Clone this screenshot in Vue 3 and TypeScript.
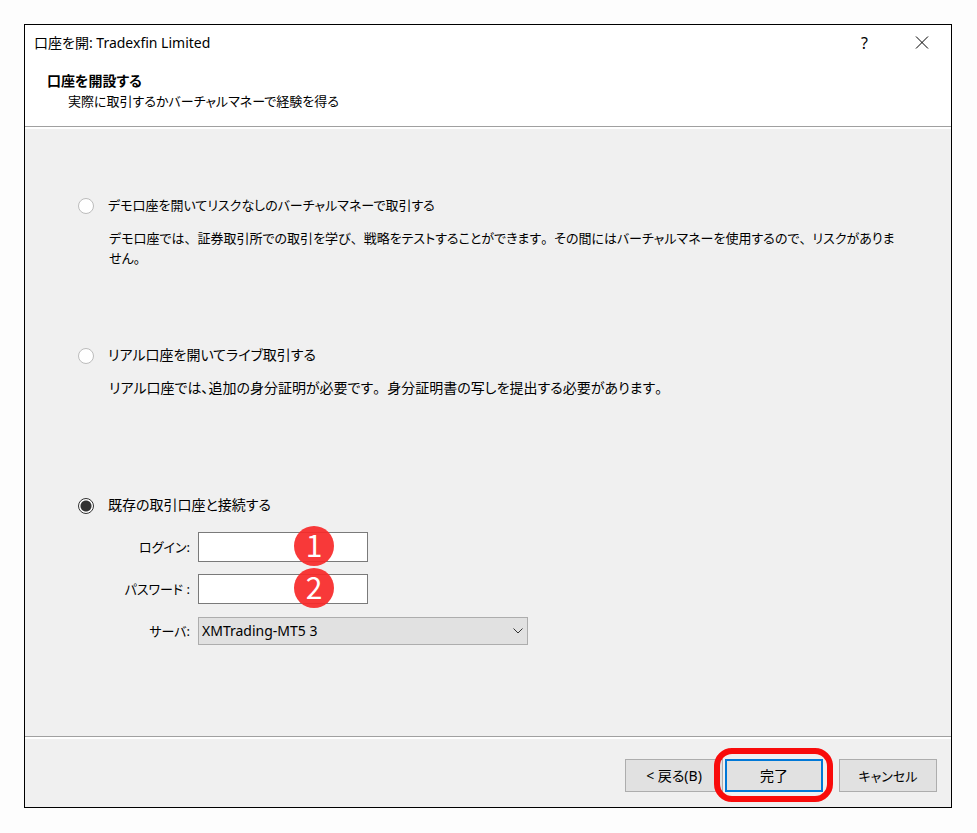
<script setup lang="ts">
import { ref } from 'vue'

type AccountMode = 'demo' | 'real' | 'existing'

const mode = ref<AccountMode>('existing')
const login = ref('')
const password = ref('')
const server = ref('XMTrading-MT5 3')
const servers: string[] = ['XMTrading-MT5 3']

const demoLines: string[] = [
  'デモ口座では、証券取引所での取引を学び、戦略をテストすることができます。その間にはバーチャルマネーを使用するので、リスクがありま',
  'せん。',
]
const realLines: string[] = [
  'リアル口座では、追加の身分証明が必要です。身分証明書の写しを提出する必要があります。',
]

// Separates punctuation, which can keep its full width while kana are set proportionally.
function pieces(line: string): string[] {
  return line.split(/([、。])/).filter((part) => part !== '')
}

function markClass(part: string): Record<string, boolean> {
  return { comma: part === '、', period: part === '。' }
}
</script>

<template>
  <main class="dialog">
    <header class="top">
      <div class="titlebar">
        <span class="caption">口座を開: Tradexfin Limited</span>
        <div class="window-buttons">
          <button type="button" class="icon-button" aria-label="ヘルプ">?</button>
          <button type="button" class="icon-button" aria-label="閉じる">
            <svg width="14" height="14" viewBox="0 0 14 14" aria-hidden="true">
              <path d="M1 0.5L13 12.5M13 0.5L1 12.5" fill="none" stroke="#000" stroke-width="1" />
            </svg>
          </button>
        </div>
      </div>
      <div class="intro">
        <h1>口座を開設する</h1>
        <p class="compact">実際に取引するかバーチャルマネーで経験を得る</p>
      </div>
    </header>

    <form id="account-form" class="body" @submit.prevent>
      <section class="option">
        <label class="choice compact">
          <input v-model="mode" type="radio" name="mode" value="demo" />
          <span>デモ口座を開いてリスクなしのバーチャルマネーで取引する</span>
        </label>
        <p class="description compact">
          <span v-for="line in demoLines" :key="line" class="line"><span
            v-for="(part, index) in pieces(line)"
            :key="index"
            :class="markClass(part)"
          >{{ part }}</span></span>
        </p>
      </section>

      <section class="option">
        <label class="choice">
          <input v-model="mode" type="radio" name="mode" value="real" />
          <span>リアル口座を開いてライブ取引する</span>
        </label>
        <p class="description">
          <span v-for="line in realLines" :key="line" class="line"><span
            v-for="(part, index) in pieces(line)"
            :key="index"
            :class="markClass(part)"
          >{{ part }}</span></span>
        </p>
      </section>

      <section class="option">
        <label class="choice">
          <input v-model="mode" type="radio" name="mode" value="existing" />
          <span>既存の取引口座と接続する</span>
        </label>
        <div class="fields">
          <label for="login" class="compact">ログイン:</label>
          <div class="entry">
            <input id="login" v-model="login" type="text" />
            <span class="badge">1</span>
          </div>
          <label for="password" class="compact">パスワード :</label>
          <div class="entry">
            <input id="password" v-model="password" type="password" />
            <span class="badge">2</span>
          </div>
          <label for="server" class="compact">サーバ:</label>
          <div class="picker">
            <select id="server" v-model="server">
              <option v-for="name in servers" :key="name" :value="name">{{ name }}</option>
            </select>
            <svg class="chevron" width="10" height="6" viewBox="0 0 10 6" aria-hidden="true">
              <path d="M0.5 0.5L5 5L9.5 0.5" fill="none" stroke="#333" stroke-width="1" />
            </svg>
          </div>
        </div>
      </section>
    </form>

    <footer class="actions">
      <button type="button" class="action">&lt; 戻る(B)</button>
      <div class="highlighted">
        <button type="submit" form="account-form" class="action primary">完了</button>
      </div>
      <button type="button" class="action compact">キャンセル</button>
    </footer>
  </main>
</template>

<style>
body {
  background: #fdfdfd;
}
</style>

<style scoped>
.dialog {
  box-sizing: border-box;
  margin: 24px 25px 25px 24px;
  border: 1px solid #000;
  background: #f0f0f0;
  color: #000;
  font-family: "Noto Sans", "Noto Sans CJK JP", sans-serif;
  font-size: 14px;
  line-height: 20px;
  font-feature-settings: "palt";
}

button,
input,
select {
  box-sizing: border-box;
  margin: 0;
  font: inherit;
  font-feature-settings: inherit;
  color: inherit;
}

h1,
p {
  margin: 0;
  font-size: inherit;
}

.compact {
  font-size: 13px;
}

.top {
  padding-bottom: 15px;
  background: #fff;
  border-bottom: 1px solid #a0a0a0;
}

.titlebar {
  display: flex;
  align-items: center;
  justify-content: space-between;
  height: 36px;
  padding: 0 1px 0 9px;
}

.window-buttons {
  display: flex;
}

.icon-button {
  display: flex;
  align-items: center;
  justify-content: center;
  width: 57px;
  height: 36px;
  padding: 0;
  border: 0;
  background: transparent;
  font-size: 16px;
}

.intro {
  padding: 10px 22px 0;
}

.intro p {
  padding-left: 21px;
}

.body {
  display: grid;
  grid-auto-rows: minmax(150px, auto);
  padding: 66px 53px 91px;
  border-top: 2px solid #fff;
}

.choice {
  display: flex;
  align-items: center;
  gap: 14px;
}

.choice input {
  appearance: none;
  flex: none;
  width: 16px;
  height: 16px;
  margin-top: 2px;
  border: 1px solid #bcbcbc;
  border-radius: 50%;
  background: #fff;
}

.choice input:checked {
  border-color: #333;
  background: radial-gradient(circle, #333 5px, #fff 6px);
}

.description {
  padding: 13px 0 0 31px;
}

.line {
  display: block;
}

.period,
.compact .comma {
  font-feature-settings: normal;
}

.fields {
  display: grid;
  grid-template-columns: 112px 1fr;
  column-gap: 8px;
  row-gap: 12px;
  align-items: center;
  padding-top: 17px;
}

.fields > label {
  text-align: right;
}

.entry {
  position: relative;
  width: 170px;
  height: 30px;
}

.entry input {
  display: block;
  width: 100%;
  height: 100%;
  padding: 0 4px;
  border: 1px solid #7a7a7a;
  border-radius: 0;
  background: #fff;
}

.badge {
  position: absolute;
  top: -6px;
  left: 96px;
  width: 40px;
  height: 40px;
  border-radius: 50%;
  background: rgba(247, 40, 40, 0.92);
  color: #fff;
  font-family: "Noto Sans CJK JP", sans-serif;
  font-size: 30px;
  line-height: 36px;
  text-align: center;
  pointer-events: none;
}

.picker {
  position: relative;
  width: 330px;
  margin-top: 1px;
}

.picker select {
  appearance: none;
  display: block;
  width: 100%;
  height: 28px;
  padding: 0 24px 0 3px;
  border: 1px solid #adadad;
  border-radius: 0;
  background: #e1e1e1;
}

.chevron {
  position: absolute;
  top: 11px;
  right: 5px;
  pointer-events: none;
}

.actions {
  display: flex;
  align-items: center;
  justify-content: flex-end;
  padding: 22px 14px 15px;
  border-top: 1px solid #a0a0a0;
  box-shadow: inset 0 2px #fff;
}

.action {
  width: 98px;
  height: 33px;
  padding: 0;
  border: 1px solid #adadad;
  border-radius: 0;
  background: #e1e1e1;
}

.highlighted {
  position: relative;
  margin: 0 16px 0 2px;
}

.highlighted::after {
  content: "";
  position: absolute;
  inset: -11px -10px -10px -11px;
  border: 6px solid #f90b0b;
  border-radius: 18px;
  pointer-events: none;
}

.primary {
  display: block;
  border: 2px solid #0078d7;
}
</style>
